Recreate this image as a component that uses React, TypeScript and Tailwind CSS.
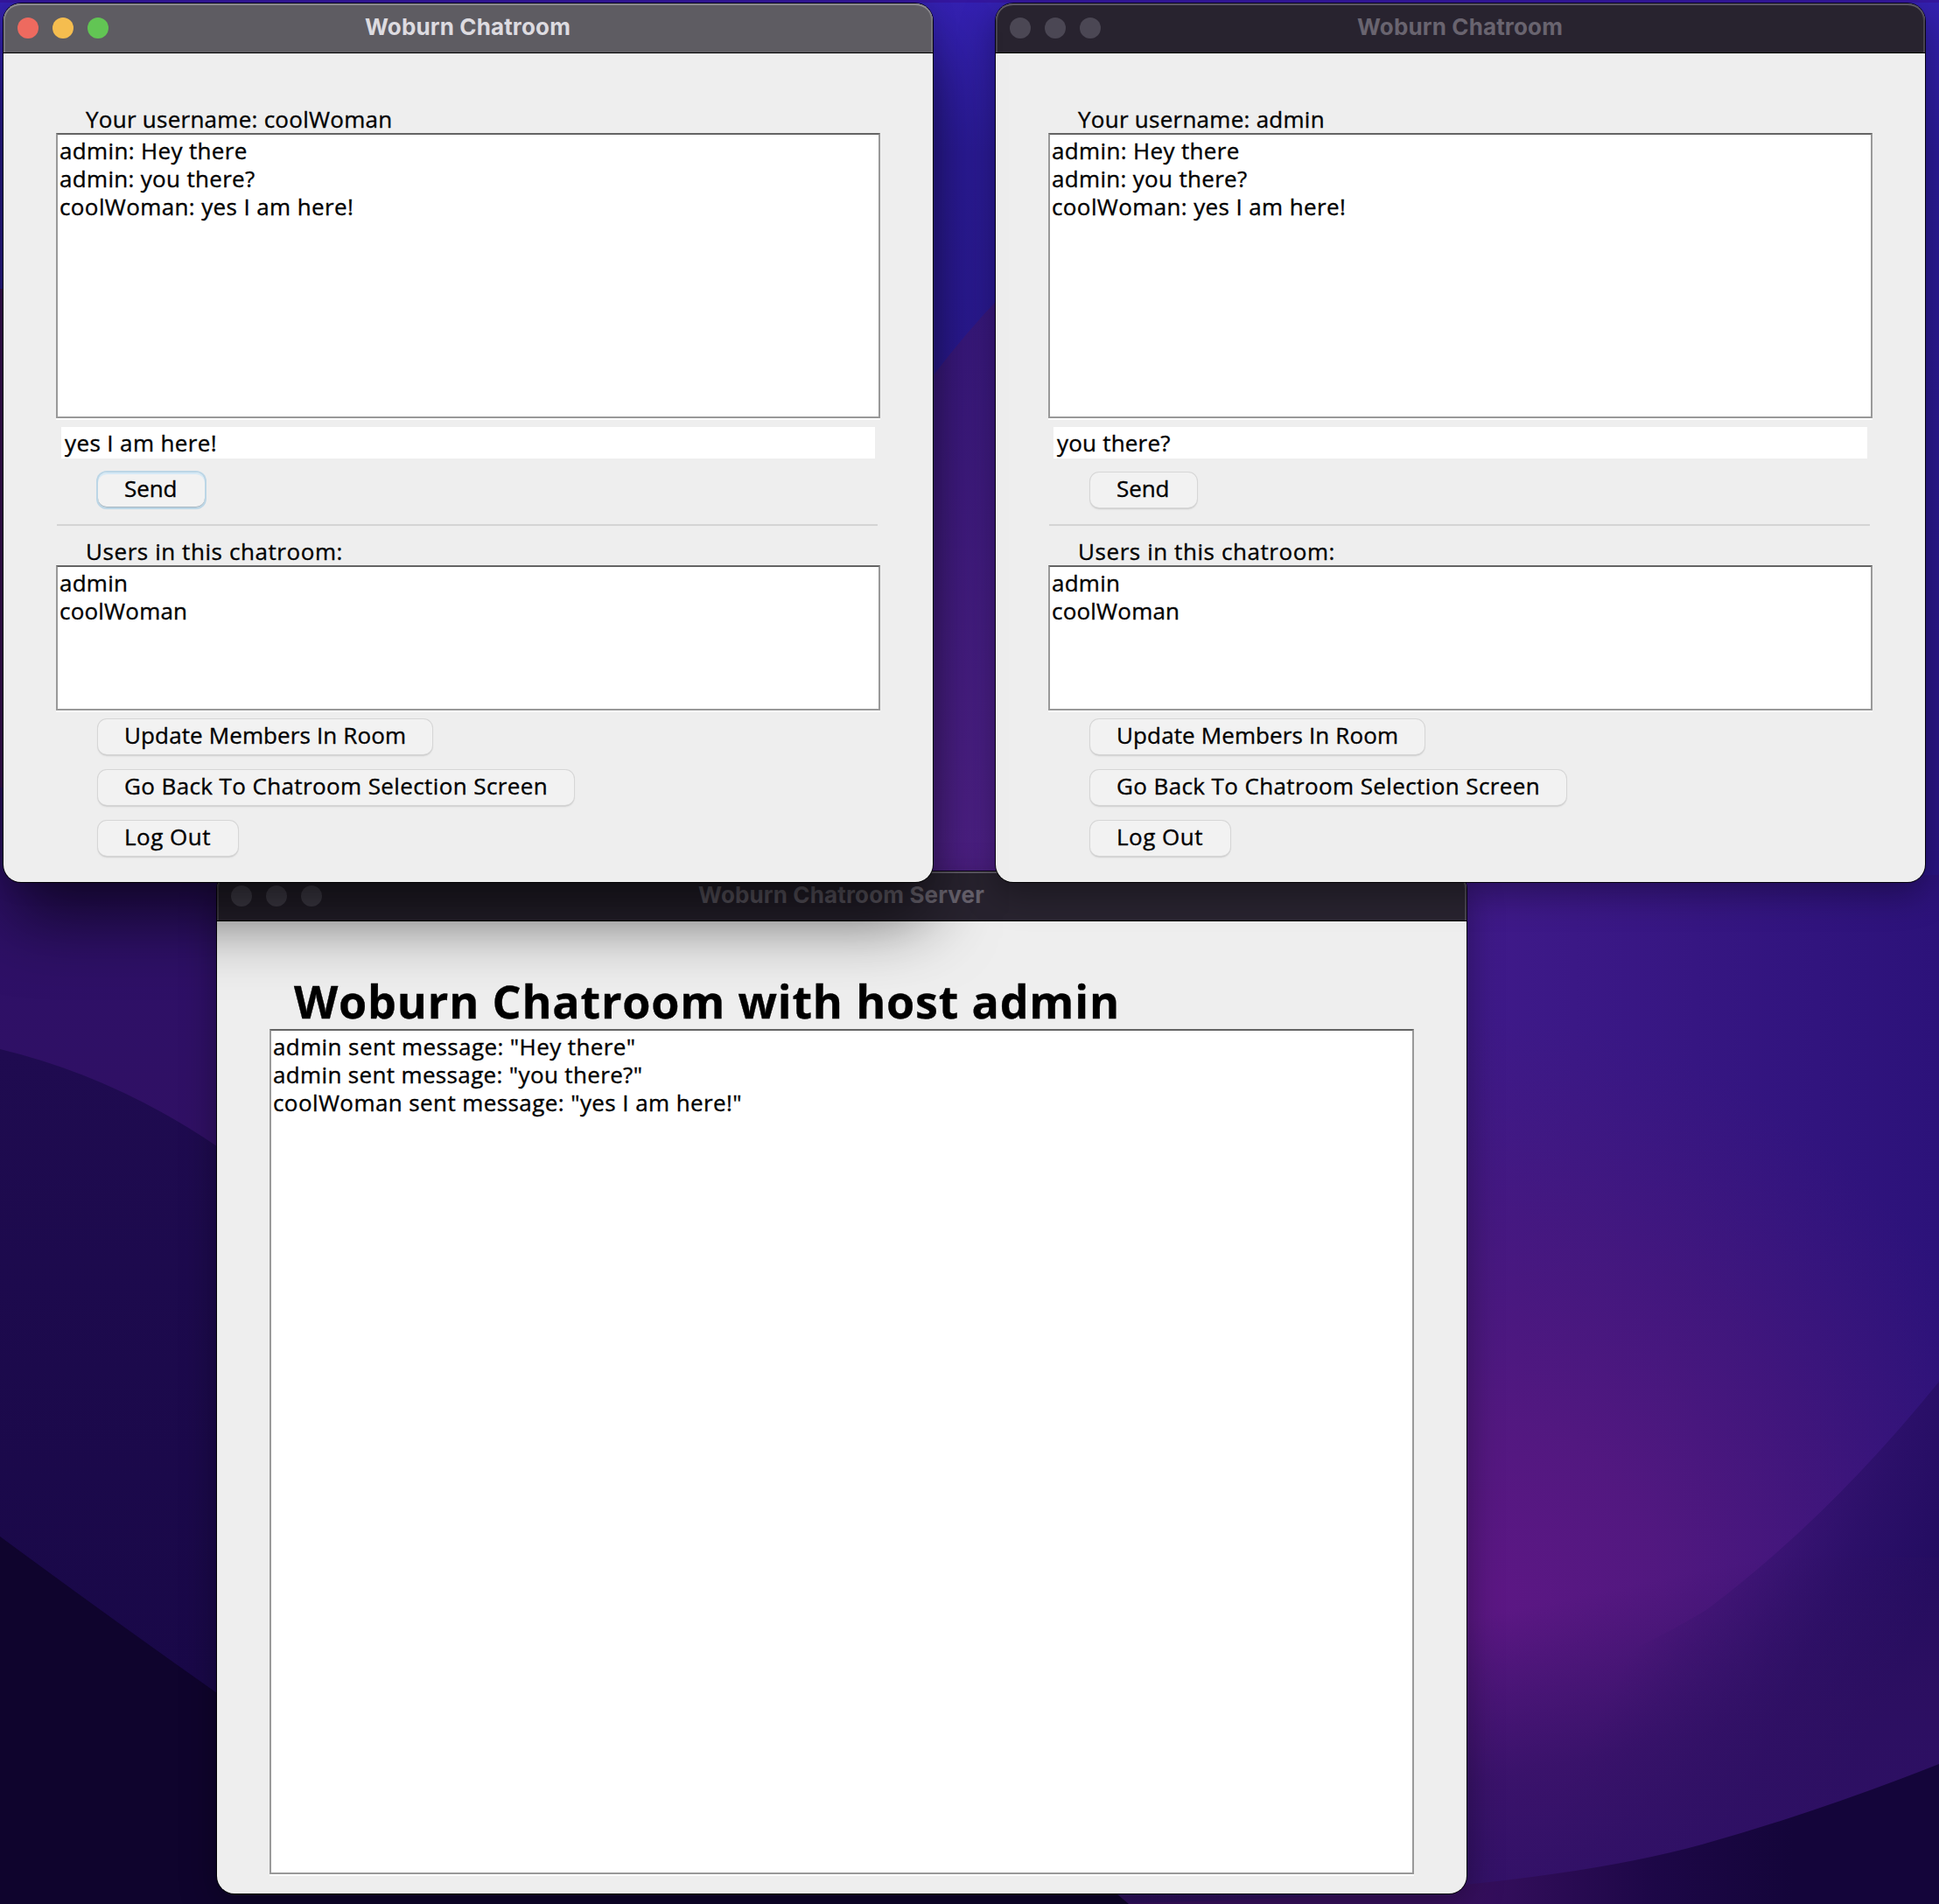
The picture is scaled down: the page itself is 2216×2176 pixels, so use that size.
import type { ReactNode } from "react";

type Line = { text: string; tracking: string };

function Wallpaper() {
  return (
    <svg className="absolute inset-0 h-full w-full" viewBox="0 0 2216 2176" preserveAspectRatio="none">
      <defs>
        <linearGradient id="sky" x1="0" y1="0" x2="0" y2="1">
          <stop offset="0" stopColor="#3421b2" />
          <stop offset="0.08" stopColor="#2b1b98" />
          <stop offset="0.3" stopColor="#2a188c" />
          <stop offset="0.5" stopColor="#2a1380" />
          <stop offset="0.75" stopColor="#2f1168" />
          <stop offset="1" stopColor="#2a0d58" />
        </linearGradient>
        <linearGradient id="hill" gradientUnits="userSpaceOnUse" x1="0" y1="330" x2="0" y2="1000">
          <stop offset="0" stopColor="#38187e" />
          <stop offset="1" stopColor="#4f2188" />
        </linearGradient>
        <linearGradient id="slope" gradientUnits="userSpaceOnUse" x1="1660" y1="0" x2="2216" y2="0">
          <stop offset="0" stopColor="#401a8a" />
          <stop offset="1" stopColor="#2c127a" />
        </linearGradient>
        <radialGradient id="glow" gradientUnits="userSpaceOnUse" cx="0" cy="0" r="1" gradientTransform="translate(1710 1820) rotate(-12) scale(620 660)">
          <stop offset="0" stopColor="#5c1784" />
          <stop offset="0.3" stopColor="#56187f" stopOpacity="0.85" />
          <stop offset="0.65" stopColor="#4e1778" stopOpacity="0.45" />
          <stop offset="1" stopColor="#441878" stopOpacity="0" />
        </radialGradient>
        <linearGradient id="wedge" gradientUnits="userSpaceOnUse" x1="1920" y1="1760" x2="2180" y2="1880">
          <stop offset="0" stopColor="#2c1066" stopOpacity="0" />
          <stop offset="0.35" stopColor="#2c1066" stopOpacity="0.4" />
          <stop offset="0.65" stopColor="#280e64" stopOpacity="0.8" />
          <stop offset="1" stopColor="#220c60" />
        </linearGradient>
        <linearGradient id="floor" gradientUnits="userSpaceOnUse" x1="1820" y1="1820" x2="1890" y2="2150">
          <stop offset="0" stopColor="#30105f" stopOpacity="0" />
          <stop offset="0.55" stopColor="#301062" stopOpacity="0.7" />
          <stop offset="1" stopColor="#2f1064" stopOpacity="0.9" />
        </linearGradient>
        <linearGradient id="shore" gradientUnits="userSpaceOnUse" x1="1650" y1="0" x2="2050" y2="0">
          <stop offset="0" stopColor="#3a1062" />
          <stop offset="0.6" stopColor="#1d0747" />
          <stop offset="1" stopColor="#14053a" />
        </linearGradient>
        <linearGradient id="left" gradientUnits="userSpaceOnUse" x1="0" y1="1008" x2="0" y2="1300">
          <stop offset="0" stopColor="#2d1068" />
          <stop offset="1" stopColor="#301064" />
        </linearGradient>
        <linearGradient id="mid" gradientUnits="userSpaceOnUse" x1="0" y1="1200" x2="0" y2="1930">
          <stop offset="0" stopColor="#1f0b50" />
          <stop offset="1" stopColor="#190848" />
        </linearGradient>
      </defs>
      <rect width="2216" height="2176" fill="url(#sky)" />
      <path d="M0 400 L0 1100 L1700 1100 L1700 60 Q1300 120 1066 430 Q600 900 0 400Z" fill="url(#hill)" />
      <path d="M0 330 H8 V1100 H0Z" fill="#3d1058" />
      <rect x="1500" y="1000" width="716" height="1176" fill="url(#slope)" />
      <rect x="1100" y="1010" width="1116" height="1166" fill="url(#glow)" />
      <path d="M2216 1579 Q2090 1735 1950 1840 Q1850 1900 1750 1930 L1750 2176 L2216 2176Z" fill="url(#wedge)" />
      <rect x="1200" y="1780" width="1016" height="396" fill="url(#floor)" />
      <path d="M1230 2176 Q1720 2170 1945 2108 Q2080 2070 2216 2016 L2216 2176Z" fill="url(#shore)" />
      <rect y="900" width="700" height="1276" fill="url(#left)" />
      <path d="M0 1199 Q130 1230 248 1310 L900 1700 L900 2176 L0 2176Z" fill="url(#mid)" />
      <path d="M0 1756 Q130 1852 248 1935 L600 2176 L0 2176Z" fill="#0f042d" />
      <path d="M248 2100 H1200 L1290 2176 H248Z" fill="#0f042d" />
      <rect width="2216" height="3" fill="#3517a0" />
    </svg>
  );
}

function WindowFrame({
  title,
  active,
  className,
  children,
}: {
  title: string;
  active?: boolean;
  className: string;
  children: ReactNode;
}) {
  const shadow = active
    ? "shadow-[0_0_0_1px_rgba(0,0,0,0.85),0_48px_80px_-8px_rgba(0,0,0,0.62),0_0_30px_rgba(0,0,0,0.15)]"
    : "shadow-[0_0_0_1px_rgba(0,0,0,0.85),0_12px_40px_rgba(0,0,0,0.36)]";
  const dots = active ? ["bg-[#ee6a5f]", "bg-[#f5bd4f]", "bg-[#62c554]"] : ["bg-[#4b4754]", "bg-[#4b4754]", "bg-[#4b4754]"];
  return (
    <section className={`absolute flex flex-col rounded-[20px] bg-[#eeeeee] ${shadow} ${className}`}>
      <header
        className={`relative flex h-14 shrink-0 items-center justify-center rounded-t-[20px] pb-[3px] ${
          active
            ? "bg-[#5e5c62] text-[#dddbe0] shadow-[inset_0_2px_0_#8b898e,inset_2px_0_0_#77757a,inset_-2px_0_0_#77757a]"
            : "bg-[#28232f] text-[#69646f] shadow-[inset_0_2px_0_#5b5761,inset_2px_0_0_#48444e,inset_-2px_0_0_#48444e]"
        }`}
      >
        <div className="absolute top-4 left-4 flex gap-4">
          {dots.map((d, i) => (
            <span key={i} className={`size-6 rounded-full ${d}`} />
          ))}
        </div>
        <h1 className="pr-px font-['Inter',sans-serif] text-[26px] leading-[56px] font-bold tracking-[0.14px] whitespace-pre">
          {title}
        </h1>
      </header>
      <div className="h-px shrink-0 bg-black" />
      <div className="flex min-h-0 flex-1 flex-col [-webkit-text-stroke:0.35px_#000]">{children}</div>
    </section>
  );
}

function ListBox({ lines, className }: { lines: Line[]; className: string }) {
  return (
    <div className={`shrink-0 border-2 border-[#999999] border-t-[#646464] bg-white pt-0.5 pl-0.5 shadow-[0_2px_0_#ffffff] ${className}`}>
      {lines.map((l) => (
        <p key={l.text} className={`leading-8 whitespace-pre ${l.tracking}`}>
          {l.text}
        </p>
      ))}
    </div>
  );
}

function PushButton({ label, className, focused }: { label: string; className: string; focused?: boolean }) {
  return (
    <button
      className={`flex h-10 items-center rounded-[10px] bg-[#f2f2f2] pb-1 pl-[30px] [-webkit-text-stroke:0.35px_#000] whitespace-pre ${
        focused
          ? "shadow-[0_0_0_2px_#bcd6e6,inset_0_2px_0_#d5e9f6,inset_0_-1px_0_#a3b5c1]"
          : "shadow-[0_0_0_1px_#d6d6d6,0_1px_1px_#a9a9a9,0_2px_2px_#d0d0d0]"
      } ${className}`}
    >
      {label}
    </button>
  );
}

function ChatWindow({
  username,
  draft,
  draftTracking,
  active,
  className,
}: {
  username: string;
  draft: string;
  draftTracking: string;
  active?: boolean;
  className: string;
}) {
  return (
    <WindowFrame title="Woburn Chatroom" active={active} className={`h-[1004px] w-[1062px] ${className}`}>
      <div className="flex flex-col pt-[59px] pl-[60px]">
        <p className="pl-[34px] leading-8 tracking-[0.26px] whitespace-pre">Your username: {username}</p>
        <ListBox
          className="h-[326px] w-[942px]"
          lines={[
            { text: "admin: Hey there", tracking: "tracking-[0.35px]" },
            { text: "admin: you there?", tracking: "tracking-[0.32px]" },
            { text: "coolWoman: yes I am here!", tracking: "tracking-[0.38px]" },
          ]}
        />
        <div className={`mt-2.5 ml-1.5 h-9 w-[930px] bg-white pl-1 leading-9 whitespace-pre ${draftTracking}`}>{draft}</div>
        <PushButton label="Send" focused={active} className="mt-4 ml-12 w-[122px] tracking-[-0.1px]" />
        <div className="mt-[19px] ml-px h-0.5 w-[938px] bg-[#d4d4d4]" />
        <p className="mt-[13px] pl-[34px] leading-8 tracking-[0.57px] whitespace-pre">Users in this chatroom:</p>
        <ListBox
          className="h-[166px] w-[942px]"
          lines={[
            { text: "admin", tracking: "tracking-[0.25px]" },
            { text: "coolWoman", tracking: "tracking-[0.2px]" },
          ]}
        />
        <div className="mt-2.5 ml-12 flex flex-col items-start gap-[18px]">
          <PushButton label="Update Members In Room" className="w-[382px] tracking-[0.12px]" />
          <PushButton label="Go Back To Chatroom Selection Screen" className="w-[544px] tracking-[0.39px]" />
          <PushButton label="Log Out" className="w-40 tracking-[0.5px]" />
        </div>
      </div>
    </WindowFrame>
  );
}

export default function App() {
  return (
    <main className="relative h-[2176px] w-[2216px] overflow-hidden bg-[#2a1378] font-['Open_Sans',sans-serif] text-[26px] font-medium text-black">
      <Wallpaper />
      <WindowFrame title="Woburn Chatroom Server" className="top-[996px] left-[248px] h-[1168px] w-[1428px]">
        <div className="flex flex-col pt-[59px] pl-[60px]">
          <h2 className="pl-7 text-[52px] leading-[64px] font-bold tracking-[0.8px] whitespace-pre">Woburn Chatroom with host admin</h2>
          <ListBox
            className="h-[966px] w-[1308px]"
            lines={[
              { text: 'admin sent message: "Hey there"', tracking: "tracking-[0.4px]" },
              { text: 'admin sent message: "you there?"', tracking: "tracking-[0.35px]" },
              { text: 'coolWoman sent message: "yes I am here!"', tracking: "tracking-[0.41px]" },
            ]}
          />
        </div>
      </WindowFrame>
      <ChatWindow className="top-1 left-[1138px]" username="admin" draft="you there?" draftTracking="tracking-[0.2px]" />
      <ChatWindow active className="top-1 left-1" username="coolWoman" draft="yes I am here!" draftTracking="tracking-[0.38px]" />
    </main>
  );
}
